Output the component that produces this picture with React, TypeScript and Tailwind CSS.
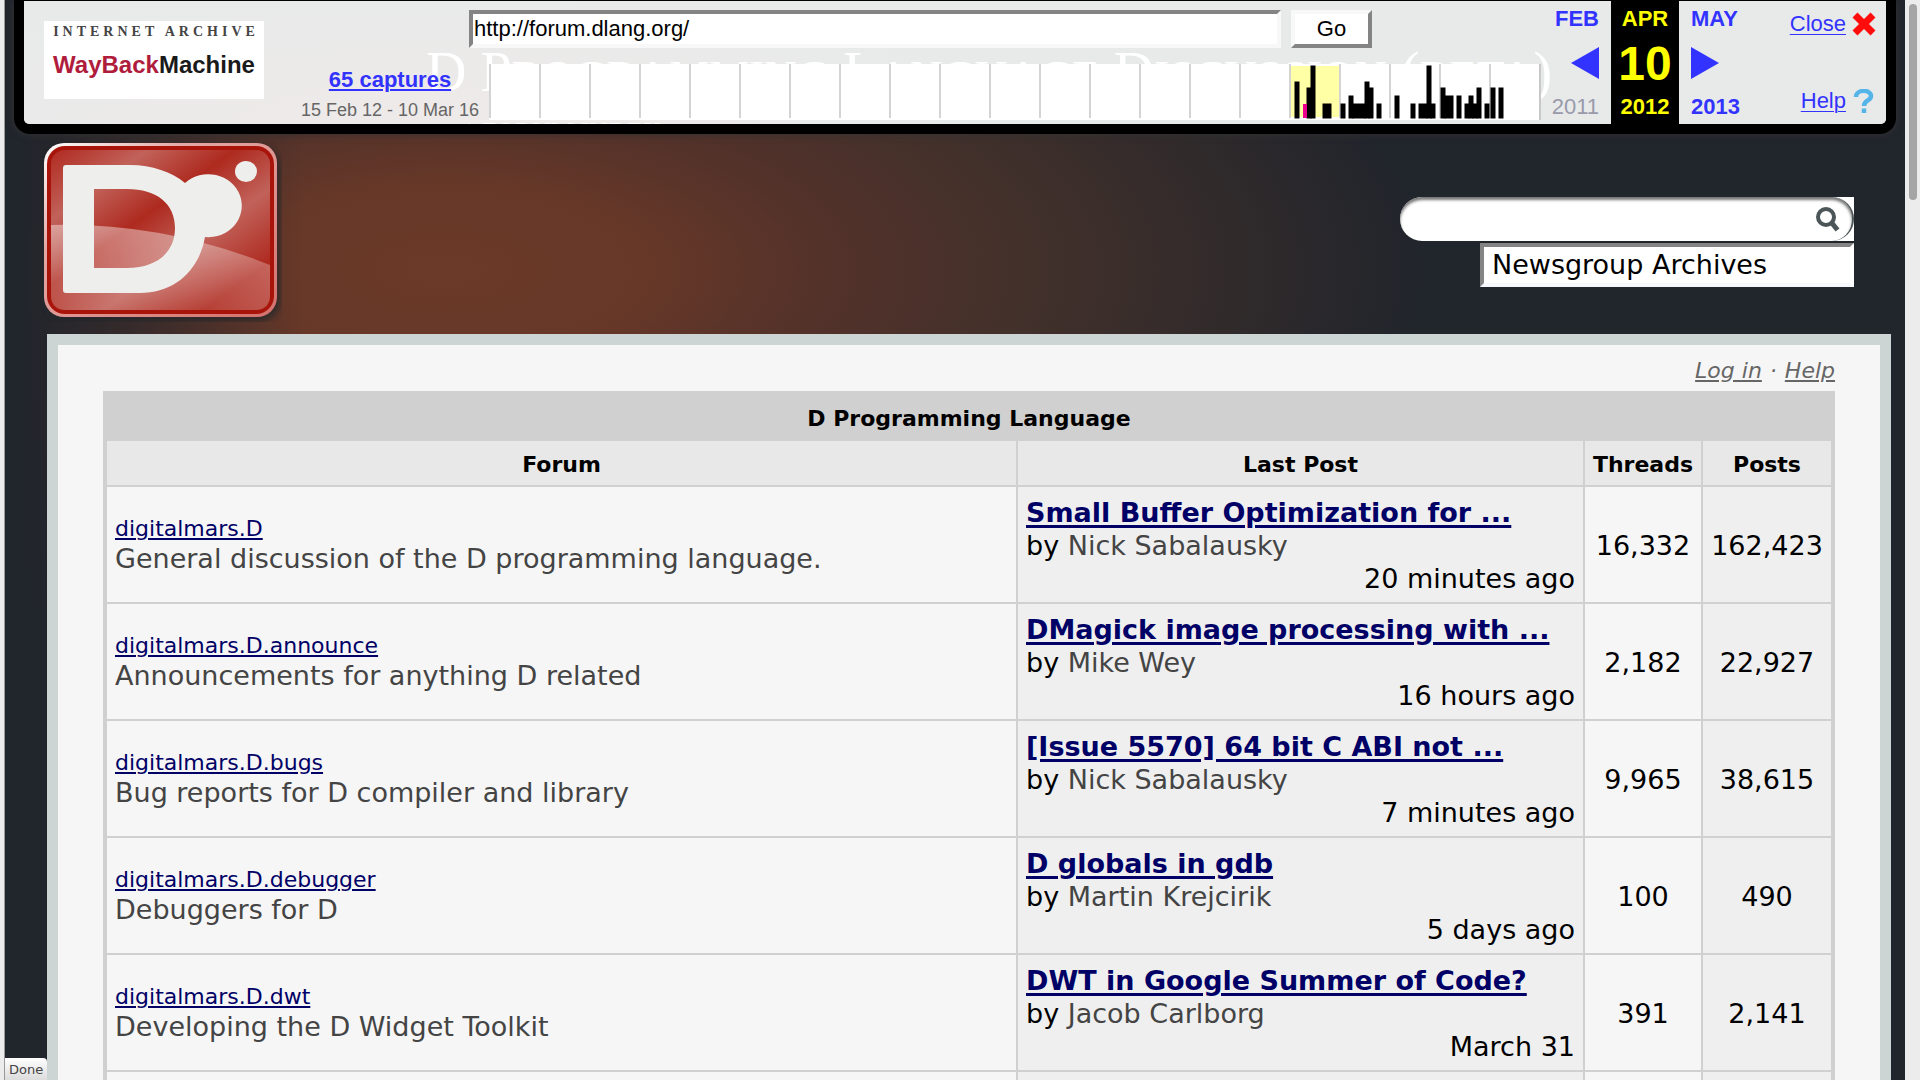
const sans = "font-['DejaVu_Sans','Noto_Sans',sans-serif]";

type Row = {
  forum: string;
  about: string;
  subject: string;
  author: string;
  when: string;
  threads: string;
  posts: string;
};

const rows: Row[] = [
  { forum: 'digitalmars.D', about: 'General discussion of the D programming language.', subject: 'Small Buffer Optimization for ...', author: 'Nick Sabalausky', when: '20 minutes ago', threads: '16,332', posts: '162,423' },
  { forum: 'digitalmars.D.announce', about: 'Announcements for anything D related', subject: 'DMagick image processing with ...', author: 'Mike Wey', when: '16 hours ago', threads: '2,182', posts: '22,927' },
  { forum: 'digitalmars.D.bugs', about: 'Bug reports for D compiler and library', subject: '[Issue 5570] 64 bit C ABI not ...', author: 'Nick Sabalausky', when: '7 minutes ago', threads: '9,965', posts: '38,615' },
  { forum: 'digitalmars.D.debugger', about: 'Debuggers for D', subject: 'D globals in gdb', author: 'Martin Krejcirik', when: '5 days ago', threads: '100', posts: '490' },
  { forum: 'digitalmars.D.dwt', about: 'Developing the D Widget Toolkit', subject: 'DWT in Google Summer of Code?', author: 'Jacob Carlborg', when: 'March 31', threads: '391', posts: '2,141' },
];

/* [x, width, height] of each capture bar, in chart units */
const bars: [number, number, number][] = [
  [806, 4, 36], [818, 4, 30], [822, 4, 52], [834, 8, 14], [852, 4, 14], [860, 4, 22],
  [864, 12, 14], [876, 4, 36], [880, 4, 30], [888, 4, 14], [906, 4, 22], [922, 4, 14],
  [930, 8, 14], [938, 4, 52], [942, 4, 14], [952, 4, 30], [956, 8, 22], [968, 4, 22],
  [976, 4, 14], [980, 4, 22], [984, 4, 14], [988, 4, 30], [996, 4, 14], [1002, 4, 30], [1010, 4, 30],
];

function CaptureChart() {
  return (
    <svg viewBox="0 0 1052 56" preserveAspectRatio="none" className="block h-14 w-full" role="img" aria-label="Captures per month">
      <rect width="1052" height="56" fill="#fff" />
      <rect x="801" y="2" width="49" height="51" fill="#ffffa5" />
      {Array.from({ length: 21 }, (_, i) => (
        <rect key={i} x={i * 50} y="0" width="2" height="54" fill="#d4d4d4" />
      ))}
      <rect x="1050" y="0" width="2" height="56" fill="#c8c8c8" />
      {bars.map(([x, w, h]) => (
        <rect key={x} x={x} y={54 - h} width={w} height={h} fill="#000" stroke="#000" strokeWidth="1" />
      ))}
      <rect x="814" y="40" width="4" height="14" fill="#ec008c" />
    </svg>
  );
}

function WaybackLogo() {
  return (
    <a href="#wayback" className="mt-5 flex h-[78px] w-[220px] shrink-0 flex-col items-center bg-white">
      <span className="mt-1 pl-1 font-['Liberation_Serif',serif] text-[14px] font-bold leading-[14px] tracking-[4px] whitespace-nowrap text-[#444]">INTERNET ARCHIVE</span>
      <span className="font-['Liberation_Sans',sans-serif] text-[24px] font-bold leading-[52px] whitespace-nowrap">
        <span className="text-[#b01c3c]">WayBack</span>
        <span className="text-[#1a1a1a]">Machine</span>
      </span>
    </a>
  );
}

function DLogo() {
  return (
    <svg viewBox="0 0 240 180" className="block h-[180px] w-[240px]" role="img" aria-label="D">
      <defs>
        <linearGradient id="face" x1="0" y1="0" x2="1" y2="1">
          <stop offset="0" stopColor="#b02a20" />
          <stop offset=".22" stopColor="#c1625a" />
          <stop offset=".42" stopColor="#ae2a1f" />
          <stop offset=".62" stopColor="#c1625a" />
          <stop offset=".85" stopColor="#ae2a1f" />
          <stop offset="1" stopColor="#b8453b" />
        </linearGradient>
        <linearGradient id="rim" x1="0" y1="0" x2="1" y2="1">
          <stop offset="0" stopColor="#fff" />
          <stop offset=".3" stopColor="#e4a9a6" />
          <stop offset="1" stopColor="#d5706b" />
        </linearGradient>
        <linearGradient id="gloss" x1="0" y1="0" x2="0" y2="1">
          <stop offset="0" stopColor="#fff" stopOpacity=".42" />
          <stop offset="1" stopColor="#fff" stopOpacity=".1" />
        </linearGradient>
        <filter id="soft" x="-10%" y="-10%" width="120%" height="120%">
          <feGaussianBlur stdDeviation="3" />
        </filter>
      </defs>
      <rect x="3" y="4" width="236" height="176" rx="22" fill="#20262c" opacity=".7" filter="url(#soft)" />
      <rect x="2" y="1" width="233" height="174" rx="20" fill="url(#rim)" />
      <rect x="5" y="4" width="227" height="168" rx="18" fill="#a81409" />
      <rect x="9" y="8" width="219" height="160" rx="14" fill="url(#face)" />
      <path d="M9 83Q120 80 228 123V154Q228 168 214 168H23Q9 168 9 154Z" fill="url(#gloss)" />
      <path
        fillRule="evenodd"
        fill="#eeeeec"
        d="M24 23H88C110 23 130 30 143 41A33.500 31.500 0 1 1 163 95C157 129 132 151 98 151H24Q21 151 21 148V26Q21 23 24 23ZM52 47V126H85C115 126 133 110 133 86S115 47 85 47Z"
      />
      <ellipse cx="204" cy="29.500" rx="11" ry="10.500" fill="#eeeeec" />
    </svg>
  );
}

const titleWords = [['', 'D', ''], ['', 'P', 'ROGRAMMING'], ['', 'L', 'ANGUAGE'], ['', 'D', 'ISCUSSION'], ['(', '', 'BETA']];

function Toolbar() {
  return (
    <section aria-label="Wayback Machine toolbar" className="relative mr-[9px] ml-[9px] rounded-b-[16px] border-x-[10px] border-t border-b-[10px] border-black bg-[#e8eaea] font-['Liberation_Sans',sans-serif] shadow-[0_0_8px_#333]">
      <div className="absolute inset-0 overflow-hidden rounded-b-[5px] bg-[radial-gradient(ellipse_600px_160px_at_400px_140px,#efeae9,#e8eaea)]">
        <h1 className="pt-[39px] pl-[402px] font-['Liberation_Serif',serif] text-[56px] leading-[64px] whitespace-nowrap text-white">
          {titleWords.map(([open, cap, rest], i) => (
            <span key={i}>
              {open}
              {cap}
              <span className="text-[45px]">{rest}</span>
              {i < titleWords.length - 1 ? ' ' : ')'}
            </span>
          ))}
        </h1>
        <p className="pt-3 pl-[444px] font-['Liberation_Serif',serif] text-[26px] leading-[24px] whitespace-nowrap text-white">\ FORUM INDEX</p>
      </div>
      <div className="relative flex h-[123px]">
        <div className="flex w-[465px] shrink-0 justify-between pl-5">
          <WaybackLogo />
          <div className="w-[198px] pt-[66px] text-center">
            <a href="#captures" className="block text-[22px] leading-[26px] font-bold whitespace-nowrap text-[#3333ff] underline decoration-2 underline-offset-2">65 captures</a>
            <div className="pt-1 text-[18px] leading-[26px] whitespace-nowrap text-[#666]">15 Feb 12 - 10 Mar 16</div>
          </div>
        </div>
        <div className="min-w-0 flex-1">
          <form className="flex gap-[10px] pt-[9px] pr-[169px] -ml-5" onSubmit={(e) => e.preventDefault()}>
            <input aria-label="Address" defaultValue="http://forum.dlang.org/" className="h-[38px] min-w-0 flex-1 border-4 border-t-[#848484] border-r-[#f8f8f8] border-b-[#f8f8f8] border-l-[#848484] bg-white px-px text-[22px] text-black" />
            <button type="submit" className="h-[38px] w-[81px] border-4 border-t-[#f8f8f8] border-r-[#848484] border-b-[#848484] border-l-[#f8f8f8] bg-white text-[22px] leading-[30px] text-black">Go</button>
          </form>
          <div className="pt-4">
            <CaptureChart />
          </div>
        </div>
        <div className="flex shrink-0 text-[22px] leading-6 font-bold text-[#3333ff]">
          <div className="flex w-[70px] flex-col items-end justify-between pt-[6px] pr-3 pb-[5px]">
            <span>FEB</span>
            <a href="#previous" aria-label="Previous capture"><svg viewBox="0 0 28 32" className="h-8 w-7"><path d="M0 16 28 0V32Z" fill="currentColor" /></svg></a>
            <span className="font-normal text-[#9999aa]">2011</span>
          </div>
          <div className="flex w-[68px] flex-col items-center justify-between bg-black pt-[6px] pb-[5px] text-[#ffff00]">
            <span>APR</span>
            <span className="pt-[2px] text-[48px] leading-8">10</span>
            <span>2012</span>
          </div>
          <div className="flex w-[70px] flex-col items-start justify-between pt-[6px] pb-[5px] pl-3">
            <span>MAY</span>
            <a href="#next" aria-label="Next capture"><svg viewBox="0 0 28 32" className="h-8 w-7"><path d="M28 16 0 0V32Z" fill="currentColor" /></svg></a>
            <a href="#2013">2013</a>
          </div>
        </div>
        <div className="flex w-[137px] shrink-0 flex-col items-end justify-between pt-[9px] pr-[10px] pb-[9px] text-[22px] leading-7 text-[#3333ff]">
          <a href="#close" className="flex items-center gap-[6px]">
            <span className="underline decoration-1 underline-offset-3">Close</span>
            <svg viewBox="0 0 24 24" className="h-6 w-6"><path d="M3 3 21 21M21 3 3 21" stroke="#ff0d0d" strokeWidth="7" /></svg>
          </a>
          <a href="#help" className="flex items-center gap-[6px]">
            <span className="underline decoration-1 underline-offset-3">Help</span>
            <svg viewBox="0 0 24 24" className="h-6 w-6"><path d="M4 8C4 0 19 0 19 7 19 12 12 11 12 17M12 19.500V24" fill="none" stroke="#55b4e8" strokeWidth="4.500" /></svg>
          </a>
        </div>
      </div>
    </section>
  );
}

function SiteHeader() {
  return (
    <header className="flex h-[200px] items-start justify-between pt-2 pr-[51px] pl-[37px]">
      <a href="#home"><DLogo /></a>
      <form className="flex flex-col items-end gap-[2px] pt-[55px]" onSubmit={(e) => e.preventDefault()}>
        <div className="flex h-11 w-[454px] bg-[linear-gradient(to_right,transparent_50%,#fff_50%)]">
          <div className="flex flex-1 items-center rounded-full border-r-2 border-[#4c5558] bg-white shadow-[inset_0_3px_3px_#777]">
            <input type="search" aria-label="Search" className="h-9 min-w-0 flex-1 bg-transparent pl-6 text-[22px] outline-none" />
            <button type="submit" aria-label="Go" className="mr-[10px]">
              <svg viewBox="0 0 28 28" className="h-7 w-7" fill="none" stroke="#4c5558"><circle cx="12" cy="12" r="8" strokeWidth="4" /><path d="M17.500 17.500 23.500 25" strokeWidth="5" /></svg>
            </button>
          </div>
        </div>
        <select aria-label="Search in" className="h-11 w-[374px] appearance-none border-4 border-t-[#848484] border-r-white border-b-[#f6f8fc] border-l-[#848484] bg-white px-2 text-[27px] leading-8 text-black">
          <option>Newsgroup Archives</option>
        </select>
      </form>
    </header>
  );
}

function ForumTable() {
  return (
    <table className="w-full table-fixed border-separate border-spacing-0 border-x-4 border-[#d0d0d0] text-[27px] leading-[33px]">
      <colgroup>
        <col />
        <col className="w-[567px]" />
        <col className="w-[118px]" />
        <col className="w-[128px]" />
      </colgroup>
      <thead className="text-[22px] leading-7">
        <tr>
          <th colSpan={4} className="h-[50px] bg-[#d0d0d0] pt-[6px] pb-0">D Programming Language</th>
        </tr>
        <tr className="bg-[#e8e8e8]">
          <th className="h-[46px] border-r-2 border-b-2 border-[#d0d0d0] pt-[3px]">Forum</th>
          <th className="border-r-2 border-b-2 border-[#d0d0d0] pt-[3px]">Last Post</th>
          <th className="border-r-2 border-b-2 border-[#d0d0d0] pt-[3px]">Threads</th>
          <th className="border-b-2 border-[#d0d0d0] pt-[3px]">Posts</th>
        </tr>
      </thead>
      <tbody>
        {rows.map((r) => (
          <tr key={r.forum}>
            <td className="border-r-2 border-b-2 border-[#d0d0d0] px-2 pt-[2px] text-[#444]">
              <a href={'#' + r.forum} className="block w-fit text-[22px] leading-[26px] text-[#000066] underline underline-offset-2">{r.forum}</a>
              {r.about}
            </td>
            <td className="border-r-2 border-b-2 border-[#d0d0d0] bg-[#efefef] px-2 pt-[9px] pb-[7px] whitespace-nowrap">
              <a href="#post" className="block w-fit font-bold text-[#000066] underline decoration-3 underline-offset-3">{r.subject}</a>
              <div>by <span className="text-[#444]">{r.author}</span></div>
              <div className="text-right">{r.when}</div>
            </td>
            <td className="border-r-2 border-b-2 border-[#d0d0d0] pt-[2px] text-center">{r.threads}</td>
            <td className="border-b-2 border-[#d0d0d0] bg-[#efefef] pt-[2px] text-center">{r.posts}</td>
          </tr>
        ))}
        <tr>
          <td className="h-[117px] border-r-2 border-[#d0d0d0]" />
          <td className="border-r-2 border-[#d0d0d0] bg-[#efefef]" />
          <td className="border-r-2 border-[#d0d0d0]" />
          <td className="bg-[#efefef]" />
        </tr>
      </tbody>
    </table>
  );
}

export default function App() {
  return (
    <div className={`relative flex h-screen overflow-hidden bg-[#ececec] text-black ${sans}`}>
      <div className="h-full w-[5px] shrink-0 border-r border-[#999] bg-[#ececec]" />
      <div className="h-full min-w-0 flex-1 overflow-hidden bg-[#21252c] bg-[linear-gradient(to_right,#21252c_15px,transparent_300px),radial-gradient(ellipse_1000px_420px_at_440px_270px,#6b3a28_0%,#673828_20%,#54322a_37%,#41302b_60%,#302a2b_80%,#21252c_98%)]">
        <Toolbar />
        <SiteHeader />
        <main className="mr-[14px] ml-[42px] border-[11px] border-[#ccd4d4] bg-[#f6f6f6] px-[45px]">
          <nav className="flex h-[46px] items-center justify-end gap-2 pt-1 text-[22px] text-[#666] italic">
            <a href="#login" className="underline underline-offset-2">Log in</a>
            <span>·</span>
            <a href="#help" className="underline underline-offset-2">Help</a>
          </nav>
          <ForumTable />
        </main>
      </div>
      <div className="h-full w-[15px] shrink-0 bg-[#ececec] px-1 pt-1">
        <div className="h-[196px] w-2 rounded-full bg-[#a5a5a5]" />
      </div>
      <div role="status" className="absolute bottom-0 left-[5px] h-[22px] w-[42px] rounded-tr-sm bg-linear-to-b from-white to-[#dcdcdc] pl-1 text-[13px] leading-6 text-[#444]">Done</div>
    </div>
  );
}
